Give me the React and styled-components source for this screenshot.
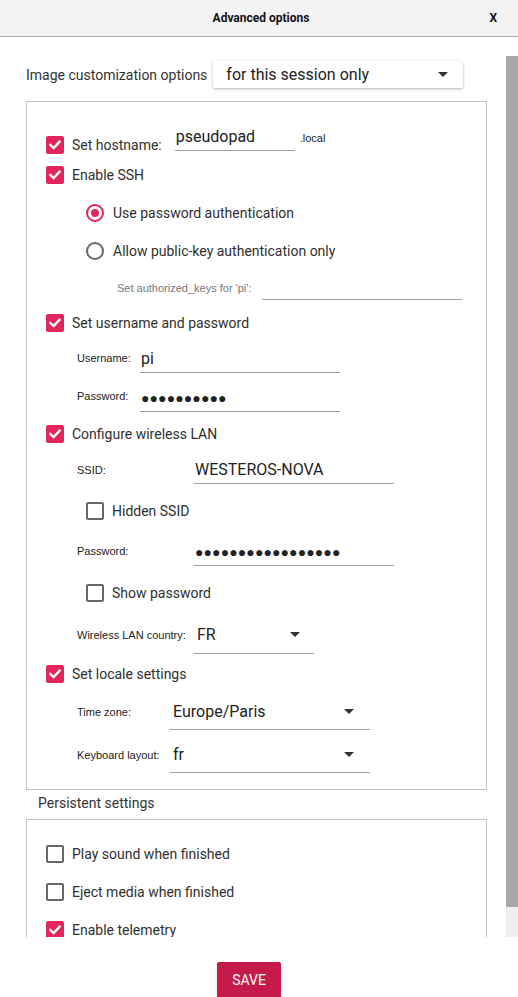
import React from 'react'
import styled, { createGlobalStyle } from 'styled-components'

const GlobalStyle = createGlobalStyle`
  html, body {
    margin: 0;
    padding: 0;
    background: #ffffff;
  }
  body {
    font-family: Roboto, "Liberation Sans", sans-serif;
    color: #303030;
  }
`

const ACCENT = '#e2255b'

const Window = styled.div`
  width: 518px;
  height: 997px;
  display: flex;
  flex-direction: column;
  overflow: hidden;
  background: #fff;
`

const TitleBar = styled.div`
  height: 36px;
  flex: none;
  display: grid;
  grid-template-columns: 1fr auto 1fr;
  align-items: center;
  background: #f3f3f3;
  border-bottom: 1px solid #a9a9a9;
  font-size: 12px;
  font-weight: 700;
  color: #111;
`

const Title = styled.div`
  grid-column: 2;
  padding-left: 4px;
`

const Close = styled.div`
  grid-column: 3;
  justify-self: end;
  padding-right: 21px;
`

const ScrollArea = styled.div`
  margin-top: 19px;
  height: 881px;
  flex: none;
  display: flex;
`

const Viewport = styled.div`
  flex: 1;
  overflow: hidden;
`

const Track = styled.div`
  width: 12px;
  flex: none;
  background: #efefef;
`

const Thumb = styled.div`
  height: ${({ $h }) => $h}px;
  background: #a8a8a8;
`

const Content = styled.div`
  padding: 5px 19px 7px 26px;
  display: flex;
  flex-direction: column;
`

const TopRow = styled.div`
  height: 27px;
  display: flex;
  align-items: center;
  gap: 6px;
`

const TopLabel = styled.span`
  font-size: 14px;
  color: #333;
`

const Combo = styled.div`
  width: 250px;
  height: 27px;
  box-sizing: border-box;
  display: flex;
  align-items: center;
  justify-content: space-between;
  padding: 0 15px 0 13px;
  background: #fff;
  border-radius: 2px;
  box-shadow: 0 1px 3px rgba(0, 0, 0, 0.3);
  font-size: 16px;
  color: #222;
`

const GroupBox = styled.div`
  border: 1px solid #c4c4c4;
  margin-top: ${({ $mt }) => $mt}px;
  padding: ${({ $pt }) => $pt}px 0 ${({ $pb }) => $pb}px 19px;
  display: flex;
  flex-direction: column;
`

const Row = styled.div`
  height: 30px;
  display: flex;
  align-items: center;
  margin-top: ${({ $mt }) => $mt || 0}px;
  padding-left: ${({ $indent }) => $indent || 0}px;
`

const Box = styled.span`
  width: 18px;
  height: 18px;
  flex: none;
  box-sizing: border-box;
  border-radius: 2px;
  display: flex;
  align-items: center;
  justify-content: center;
  background: ${({ $on }) => ($on ? ACCENT : '#fff')};
  border: ${({ $on }) => ($on ? 'none' : '2px solid #686868')};
`

const Radio = styled.span`
  width: 18px;
  height: 18px;
  flex: none;
  box-sizing: border-box;
  border-radius: 50%;
  border: 2px solid ${({ $on }) => ($on ? ACCENT : '#6a6a6a')};
  display: flex;
  align-items: center;
  justify-content: center;
  &::after {
    content: '';
    width: 8px;
    height: 8px;
    border-radius: 50%;
    background: ${({ $on }) => ($on ? ACCENT : 'transparent')};
  }
`

const OptionText = styled.span`
  font-size: 14px;
  color: #303030;
  margin-left: ${({ $gap }) => $gap || 8}px;
  white-space: nowrap;
`

const SmallLabel = styled.span`
  font-family: "Liberation Sans", Arial, sans-serif;
  font-size: 11px;
  color: ${({ $muted }) => ($muted ? '#777' : '#222')};
  width: ${({ $w }) => ($w ? `${$w}px` : 'auto')};
  flex: none;
  white-space: nowrap;
`

const Field = styled.div`
  width: ${({ $w }) => $w}px;
  height: ${({ $drop }) => 2 * $drop + 2}px;
  box-sizing: border-box;
  flex: none;
  display: flex;
  align-items: flex-end;
  padding: 0 0 3px 1px;
  margin-left: ${({ $ml }) => $ml || 0}px;
  border-bottom: 1px solid #a0a0a0;
  font-size: 16px;
  line-height: 20px;
  color: #222;
  white-space: nowrap;
`

const Dots = styled.span`
  font-family: "Liberation Sans", Arial, sans-serif;
  font-size: 14px;
  letter-spacing: 0.1px;
  color: #222;
`

const Select = styled.div`
  width: ${({ $w }) => $w}px;
  height: ${({ $drop }) => 2 * $drop + 2}px;
  box-sizing: border-box;
  flex: none;
  display: flex;
  align-items: center;
  justify-content: space-between;
  padding: 0 ${({ $pr }) => $pr}px 0 3px;
  border-bottom: 1px solid #a0a0a0;
  font-size: 16px;
  color: #222;
`

const Suffix = styled.span`
  font-family: "Liberation Sans", Arial, sans-serif;
  font-size: 11px;
  color: #222;
  margin: 0 0 14px 5px;
`

const SectionTitle = styled.div`
  margin: 5px 0 0 12px;
  height: 16px;
  line-height: 16px;
  font-size: 14px;
  color: #333;
`

const Footer = styled.div`
  flex: none;
  display: flex;
  justify-content: center;
  padding: 25px 20px 0 0;
`

const SaveButton = styled.button`
  width: 64px;
  height: 36px;
  border: none;
  border-radius: 2px;
  background: #c51a4a;
  color: #fff;
  font-family: Roboto, sans-serif;
  font-size: 14px;
  padding: 0;
  box-shadow: 0 1px 2px rgba(0, 0, 0, 0.2);
`

const Arrow = () => (
  <svg width="10" height="5" viewBox="0 0 10 5">
    <path d="M0 0 L10 0 L5 5 Z" fill="#333" />
  </svg>
)

const Tick = () => (
  <svg width="12" height="10" viewBox="0 0 12 10">
    <path d="M1.5 5 L4.6 8 L10.5 1.8" fill="none" stroke="#fff" strokeWidth="2.4" strokeLinecap="square" />
  </svg>
)

const Check = ({ on, children, mt, indent }) => (
  <Row $mt={mt} $indent={indent}>
    <Box $on={on}>{on && <Tick />}</Box>
    <OptionText>{children}</OptionText>
  </Row>
)

const RadioRow = ({ on, children, mt }) => (
  <Row $mt={mt} $indent={40}>
    <Radio $on={on} />
    <OptionText $gap={9}>{children}</OptionText>
  </Row>
)

const App = () => {
  return (
    <>
      <GlobalStyle />
      <Window>
        <TitleBar>
          <Title>Advanced options</Title>
          <Close>X</Close>
        </TitleBar>

        <ScrollArea>
          <Viewport>
            <Content>
              <TopRow>
                <TopLabel>Image customization options</TopLabel>
                <Combo>
                  <span>for this session only</span>
                  <Arrow />
                </Combo>
              </TopRow>

              <GroupBox $mt={13} $pt={28} $pb={19}>
                <Row>
                  <Box $on><Tick /></Box>
                  <OptionText>Set hostname:</OptionText>
                  <Field $w={120} $drop={5} $ml={13}>pseudopad</Field>
                  <Suffix>.local</Suffix>
                </Row>
                <Check on>Enable SSH</Check>
                <RadioRow on mt={8}>Use password authentication</RadioRow>
                <RadioRow mt={8}>Allow public-key authentication only</RadioRow>
                <Row $mt={7} $indent={71}>
                  <SmallLabel $muted $w={145}>Set authorized_keys for 'pi':</SmallLabel>
                  <Field $w={200} $drop={11} />
                </Row>
                <Check on mt={5}>Set username and password</Check>
                <Row $mt={5} $indent={31}>
                  <SmallLabel $w={63}>Username:</SmallLabel>
                  <Field $w={200} $drop={14}>pi</Field>
                </Row>
                <Row $mt={8} $indent={31}>
                  <SmallLabel $w={63}>Password:</SmallLabel>
                  <Field $w={200} $drop={15}><Dots>{'●'.repeat(10)}</Dots></Field>
                </Row>
                <Check on mt={8}>Configure wireless LAN</Check>
                <Row $mt={6} $indent={31}>
                  <SmallLabel $w={117}>SSID:</SmallLabel>
                  <Field $w={200} $drop={13}>WESTEROS-NOVA</Field>
                </Row>
                <Check mt={11} indent={40}>Hidden SSID</Check>
                <Row $mt={10} $indent={31}>
                  <SmallLabel $w={117}>Password:</SmallLabel>
                  <Field $w={200} $drop={14}><Dots>{'●'.repeat(17)}</Dots></Field>
                </Row>
                <Check mt={12} indent={40}>Show password</Check>
                <Row $mt={12} $indent={31}>
                  <SmallLabel $w={117}>Wireless LAN country:</SmallLabel>
                  <Select $w={120} $drop={18} $pr={14}>
                    <span>FR</span>
                    <Arrow />
                  </Select>
                </Row>
                <Check on mt={9}>Set locale settings</Check>
                <Row $mt={8} $indent={31}>
                  <SmallLabel $w={93}>Time zone:</SmallLabel>
                  <Select $w={200} $drop={17} $pr={16}>
                    <span>Europe/Paris</span>
                    <Arrow />
                  </Select>
                </Row>
                <Row $mt={13} $indent={31}>
                  <SmallLabel $w={93}>Keyboard layout:</SmallLabel>
                  <Select $w={200} $drop={17} $pr={16}>
                    <span>fr</span>
                    <Arrow />
                  </Select>
                </Row>
              </GroupBox>

              <SectionTitle>Persistent settings</SectionTitle>

              <GroupBox $mt={8} $pt={19} $pb={14}>
                <Check>Play sound when finished</Check>
                <Check mt={8}>Eject media when finished</Check>
                <Check on mt={8}>Enable telemetry</Check>
              </GroupBox>
            </Content>
          </Viewport>
          <Track>
            <Thumb $h={851} />
          </Track>
        </ScrollArea>

        <Footer>
          <SaveButton>SAVE</SaveButton>
        </Footer>
      </Window>
    </>
  )
}

export default App
